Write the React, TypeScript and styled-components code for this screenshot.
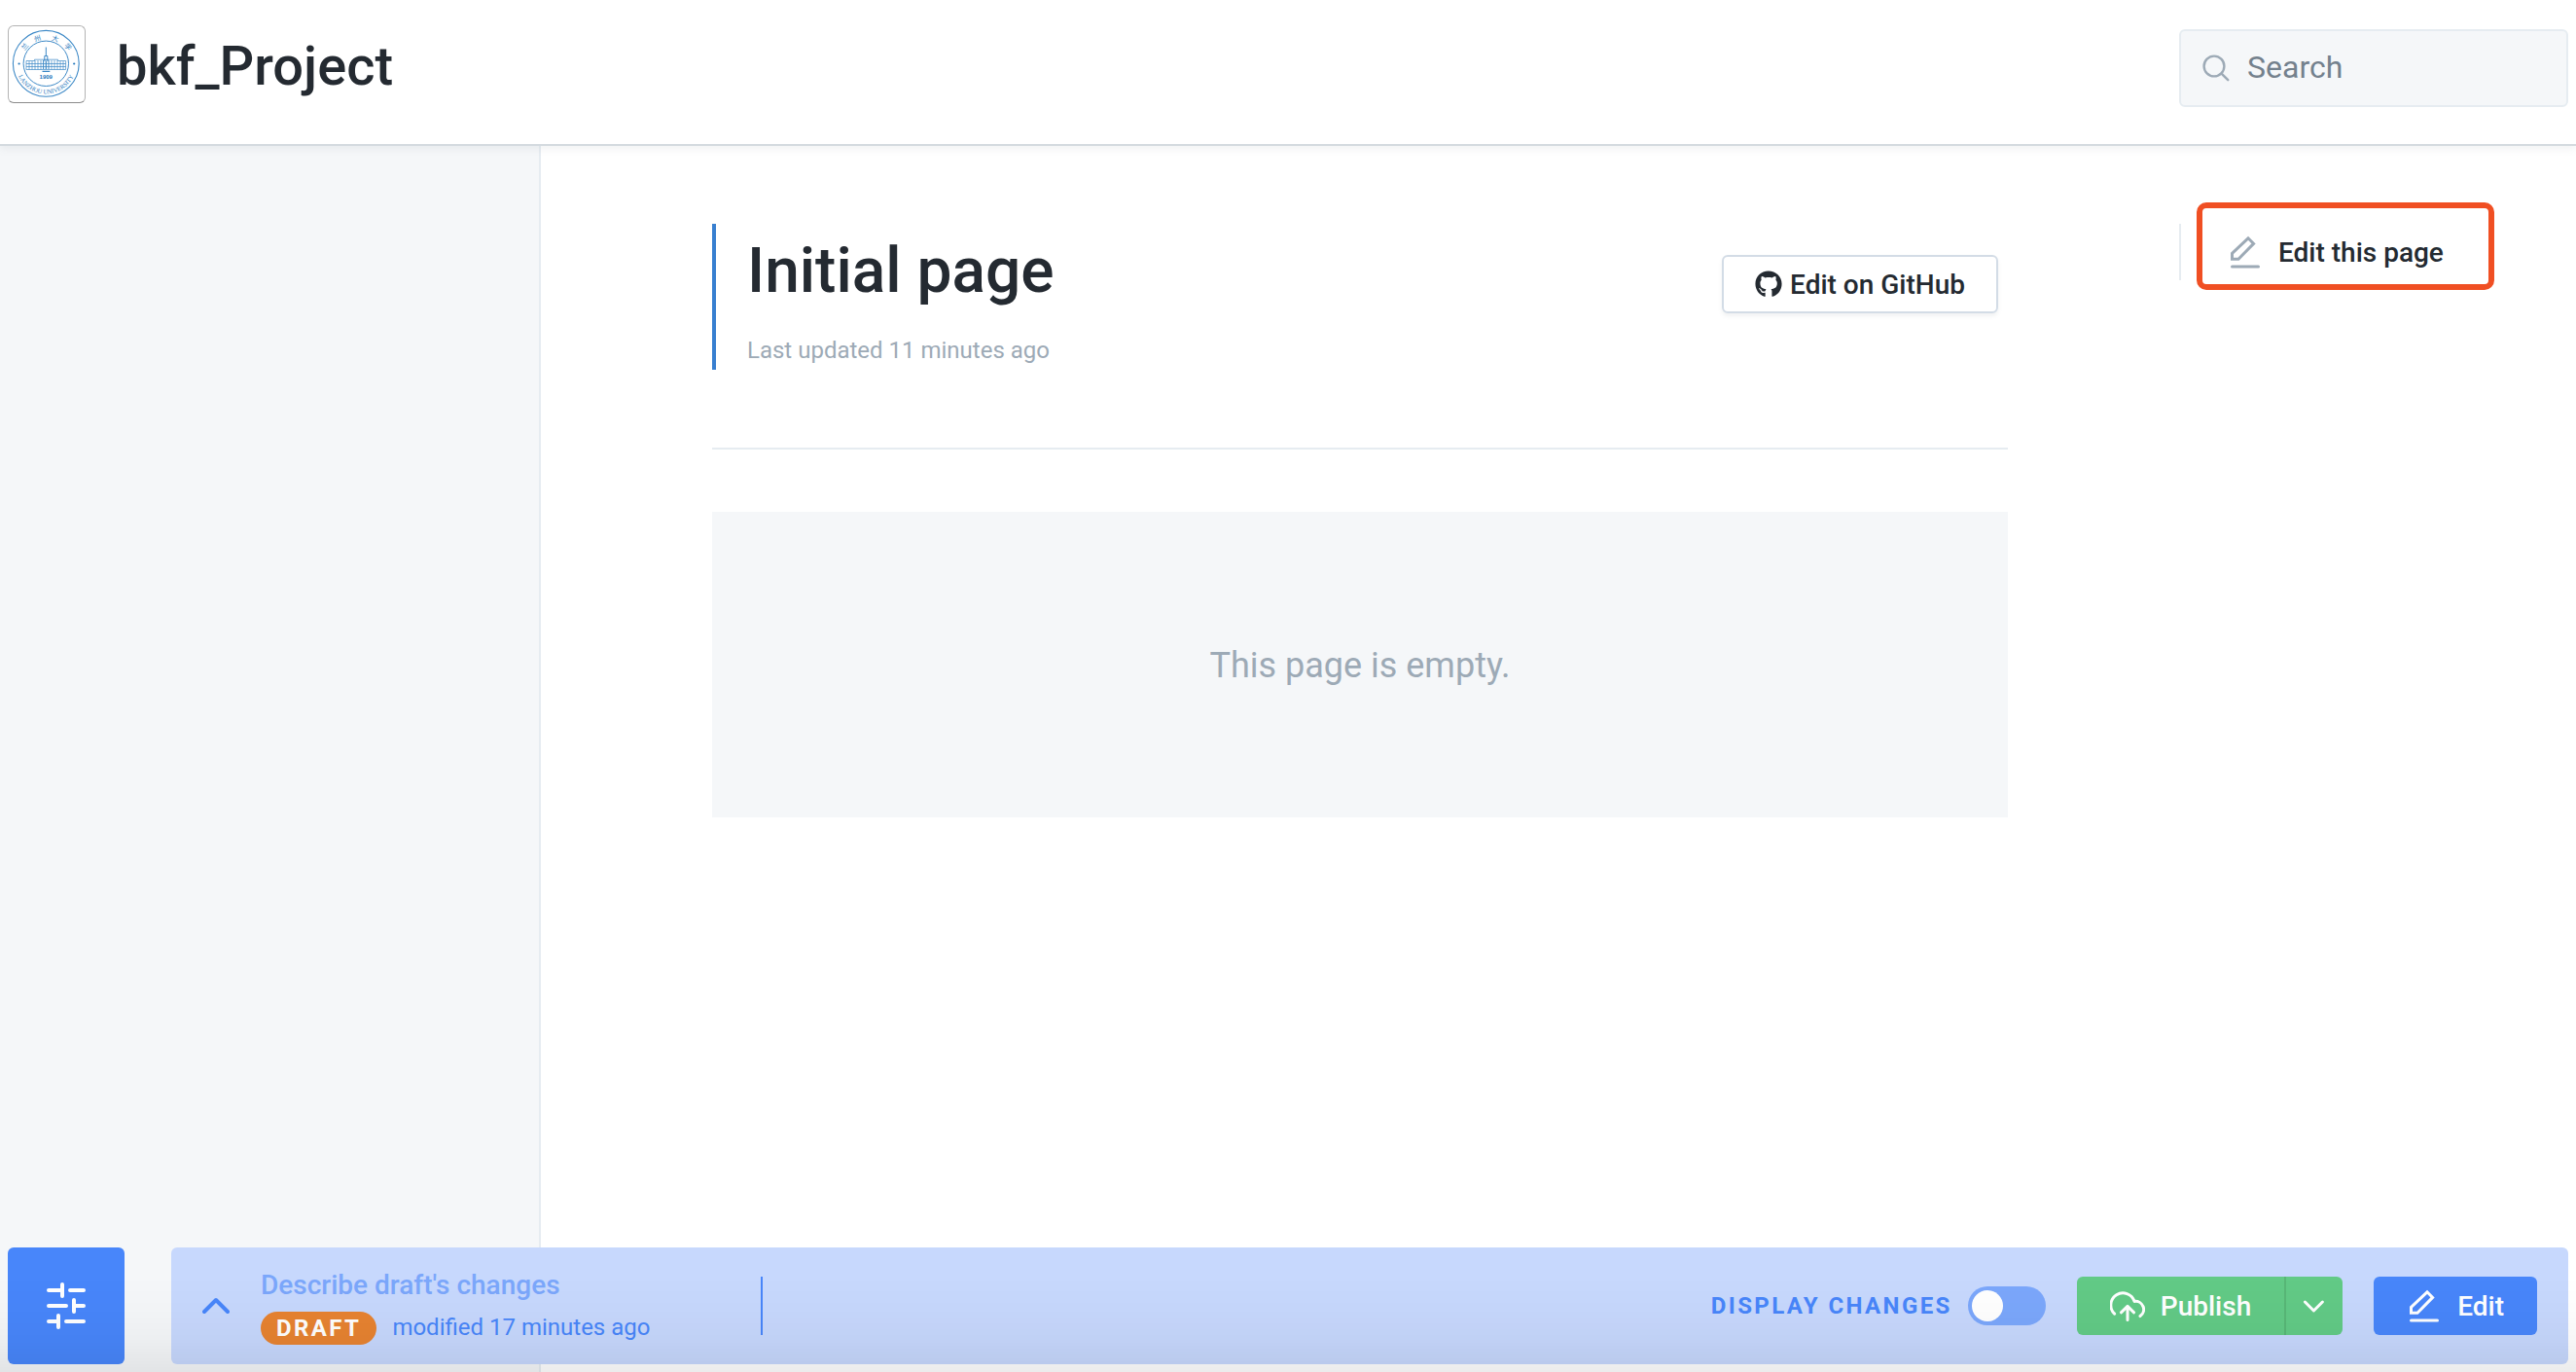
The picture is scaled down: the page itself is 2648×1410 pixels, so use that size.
import React from "react";
import styled, { createGlobalStyle } from "styled-components";
import { FaGithub } from "react-icons/fa";

const GlobalStyle = createGlobalStyle`
  *, *::before, *::after { box-sizing: border-box; }
  body {
    margin: 0;
    background: #ffffff;
    color: #242a31;
    font-family: Roboto, "Liberation Sans", sans-serif;
    font-size: 28px;
    -webkit-font-smoothing: antialiased;
  }
  button, input { font-family: inherit; }
  h1, p { margin: 0; }
`;

const Page = styled.div`
  display: flex;
  flex-direction: column;
  min-height: 100vh;
`;

const Header = styled.header`
  position: relative;
  display: flex;
  align-items: center;
  justify-content: space-between;
  height: 150px;
  padding: 0 8px 8px;
  background: #ffffff;
  border-bottom: 2px solid #d4dadf;
  box-shadow: 0 3px 8px rgba(116, 129, 141, 0.1);
`;

const Brand = styled.a`
  display: flex;
  align-items: center;
  gap: 32px;
  color: inherit;
  text-decoration: none;
`;

const LogoFrame = styled.span`
  display: block;
  width: 80px;
  height: 80px;
  margin-bottom: 8px;
  border: 1px solid #b4b4b4;
  border-bottom-color: #8c8c8c;
  border-radius: 6px;
  svg { display: block; margin: -1px; }
`;

const BrandName = styled.span`
  padding-bottom: 4px;
  font-size: 56px;
  line-height: 72px;
  font-weight: 500;
`;

const SearchBox = styled.label`
  display: flex;
  align-items: center;
  gap: 16px;
  width: 400px;
  height: 80px;
  padding: 0 20px;
  background: #f5f7f9;
  border: 2px solid #e6ecf1;
  border-radius: 6px;
  color: #9daab6;
  svg { flex: none; }
`;

const SearchInput = styled.input`
  flex: 1;
  min-width: 0;
  padding: 0 0 2px;
  border: 0;
  outline: 0;
  background: transparent;
  color: #242a31;
  font-size: 32px;
  line-height: 40px;
  &::placeholder { color: #74818d; opacity: 1; }
`;

const Body = styled.div`
  display: flex;
  flex: 1;
`;

const Sidebar = styled.nav`
  flex: none;
  width: 556px;
  background: #f5f7f9;
  border-right: 2px solid #e6ecf1;
`;

const Main = styled.main`
  flex: 1;
  min-width: 0;
  padding: 80px 176px 160px;
`;

const PageHead = styled.div`
  display: flex;
  align-items: flex-start;
  justify-content: space-between;
  padding-bottom: 80px;
  border-bottom: 2px solid #e6ecf1;
`;

const TitleBlock = styled.div`
  display: flex;
  flex-direction: column;
  gap: 12px;
  padding-left: 32px;
  border-left: 4px solid #387fd0;
`;

const Title = styled.h1`
  font-size: 64px;
  line-height: 98px;
  font-weight: 500;
`;

const Updated = styled.p`
  color: #9daab6;
  font-size: 24px;
  line-height: 40px;
`;

const GithubLink = styled.a`
  display: flex;
  align-items: center;
  gap: 8px;
  height: 60px;
  margin: 32px 10px 0 0;
  padding: 0 32px;
  border: 2px solid #d3dce6;
  border-radius: 6px;
  box-shadow: 0 3px 4px rgba(116, 129, 141, 0.1);
  color: #242a31;
  font-weight: 500;
  text-decoration: none;
`;

const EmptyNotice = styled.section`
  display: flex;
  align-items: center;
  justify-content: center;
  margin-top: 64px;
  padding: 134px 32px 132px;
  background: #f5f7f9;
  color: #9daab6;
  font-size: 36px;
  line-height: 48px;
`;

const Aside = styled.aside`
  flex: none;
  width: 408px;
  padding-top: 80px;
`;

const AsideList = styled.div`
  display: flex;
  padding-left: 16px;
  border-left: 2px solid #e6ecf1;
`;

const EditPageLink = styled.a`
  position: relative;
  display: flex;
  align-items: center;
  gap: 16px;
  width: 306px;
  height: 58px;
  padding-left: 32px;
  color: #242a31;
  font-weight: 500;
  text-decoration: none;
  svg { color: #9daab6; }
  &::after {
    content: "";
    position: absolute;
    inset: -22px 0 -10px;
    border: 6px solid #f04f23;
    border-radius: 10px;
  }
`;

const Dock = styled.footer`
  position: fixed;
  left: 8px;
  right: 8px;
  bottom: 8px;
  display: flex;
  gap: 48px;
`;

const BottomShade = styled.div`
  position: fixed;
  left: 0;
  right: 0;
  bottom: 0;
  height: 100px;
  pointer-events: none;
  background: linear-gradient(
    to bottom,
    rgba(0, 0, 0, 0),
    rgba(0, 0, 0, 0.01) 35%,
    rgba(0, 0, 0, 0.03) 65%,
    rgba(0, 0, 0, 0.075)
  );
`;

const SettingsButton = styled.button`
  display: flex;
  align-items: center;
  justify-content: center;
  flex: none;
  width: 120px;
  height: 120px;
  padding: 0;
  border: 0;
  border-radius: 6px;
  background: #4886fa;
  color: #ffffff;
`;

const DraftBar = styled.div`
  display: flex;
  align-items: center;
  flex: 1;
  min-width: 0;
  height: 120px;
  padding: 0 32px;
  border-radius: 6px;
  background: #c7d8fd;
  color: #4886fa;
`;

const ExpandButton = styled.button`
  display: flex;
  margin-right: 32px;
  padding: 0;
  border: 0;
  background: transparent;
  color: inherit;
`;

const DraftInfo = styled.div`
  display: flex;
  flex-direction: column;
  gap: 8px;
  width: 516px;
  height: 84px;
`;

const DraftInput = styled.input`
  width: 100%;
  height: 40px;
  padding: 0;
  border: 0;
  outline: 0;
  background: transparent;
  color: #4886fa;
  font-size: 28px;
  font-weight: 500;
  &::placeholder { color: #7ba7fb; opacity: 1; }
`;

const DraftMeta = styled.div`
  display: flex;
  align-items: flex-start;
  gap: 16px;
  font-size: 24px;
  line-height: 32px;
`;

const DraftBadge = styled.span`
  padding: 0 16px;
  border-radius: 17px;
  background: #e78331;
  color: #ffffff;
  font-weight: 700;
  line-height: 34px;
  letter-spacing: 0.1em;
`;

const Separator = styled.span`
  width: 2px;
  height: 60px;
  margin-left: -2px;
  background: #4886fa;
`;

const Actions = styled.div`
  display: flex;
  align-items: center;
  gap: 32px;
  margin-left: auto;
`;

const ToggleLabel = styled.label`
  display: flex;
  align-items: center;
  gap: 16px;
  font-size: 24px;
  font-weight: 700;
  line-height: 32px;
  letter-spacing: 0.1em;
`;

const Toggle = styled.input`
  appearance: none;
  display: flex;
  width: 80px;
  height: 40px;
  margin: 0;
  padding: 4px;
  border-radius: 20px;
  background: #7ba7fb;
  &::before {
    content: "";
    width: 32px;
    height: 32px;
    border-radius: 50%;
    background: #ffffff;
  }
  &:checked { justify-content: flex-end; background: #4886fa; }
`;

const ButtonGroup = styled.div`
  display: flex;
`;

const ActionButton = styled.button<{ $tone: string; $joined?: boolean }>`
  display: flex;
  align-items: center;
  gap: 16px;
  height: 60px;
  padding: 0 34px;
  border: 0;
  border-radius: ${(p) => (p.$joined ? "6px 0 0 6px" : "6px")};
  background: ${(p) => p.$tone};
  color: #ffffff;
  font-size: 28px;
  font-weight: 500;
`;

const MenuButton = styled.button`
  display: flex;
  align-items: center;
  justify-content: center;
  width: 60px;
  height: 60px;
  padding: 0;
  border: 0;
  border-left: 2px solid #58b777;
  border-radius: 0 6px 6px 0;
  background: #62ca86;
  color: #ffffff;
`;

const stroke = {
  fill: "none",
  stroke: "currentColor",
  strokeLinecap: "round" as const,
  strokeLinejoin: "round" as const,
};

const PencilIcon = () => (
  <svg width="36" height="36" viewBox="0 0 36 36" aria-hidden="true" {...stroke} strokeWidth="3">
    <path d="M4.5 25.2V19.4L21 3.8l5.6 5.6L11 25.2z" strokeLinejoin="miter" />
    <path d="M4.5 33H31.5" />
  </svg>
);

const CloudUploadIcon = () => (
  <svg width="36" height="36" viewBox="0 0 36 36" aria-hidden="true" {...stroke} strokeWidth="3">
    <path d="M4.6 26.2A12.4 12.4 0 1 1 25 13.4A8.4 8.4 0 0 1 31 28.6" />
    <path d="M11.4 24.8L18 18.4l6.6 6.4M18 19v13.4" />
  </svg>
);

const SearchIcon = () => (
  <svg width="32" height="32" viewBox="0 0 32 32" aria-hidden="true" {...stroke} strokeWidth="2.4">
    <circle cx="14" cy="14" r="10.4" />
    <path d="M21.6 21.6l6.6 6.6" />
  </svg>
);

const ChevronUp = () => (
  <svg width="28" height="28" viewBox="0 0 28 28" aria-hidden="true" {...stroke} strokeWidth="4">
    <path d="M2 20L14 8l12 12" />
  </svg>
);

const ChevronDown = () => (
  <svg width="24" height="24" viewBox="0 0 24 24" aria-hidden="true" {...stroke} strokeWidth="3">
    <path d="M2.4 8l9 9 9-9" />
  </svg>
);

const SlidersIcon = () => (
  <svg width="40" height="48" viewBox="0 0 40 48" aria-hidden="true" {...stroke} strokeWidth="4">
    <path d="M2 8H16M16 2V14M24 8H38" />
    <path d="M2 24H20M28 18V30M28 24H38" />
    <path d="M2 40H12M12 34V46M20 40H38" />
  </svg>
);

const hanzi: [string, number, number, number][] = [
  ["兰", 17.5, 22, -50],
  ["州", 30.5, 13.5, -18],
  ["大", 49, 13.5, 18],
  ["学", 62, 22, 50],
];

const UniversitySeal = () => (
  <svg width="80" height="80" viewBox="0 0 80 80" aria-hidden="true">
    <g fill="none" stroke="#3c88c6">
      <circle cx="39.3" cy="39.3" r="33.9" strokeWidth="1.1" />
      <circle cx="39.3" cy="39.3" r="23.2" strokeWidth="1" />
      <path d="M39.3 22.5V31M37.8 36V31.5h3V36M36.6 45V36h5.4v9" strokeWidth="1" />
      <path
        d="M19 36.5V45.5H59.6V36.5M19 36.5h8.5v-1.3h24v1.3h8.1M19 39.5h40.6M19 42.5h40.6M22 37v8.5M25 37v8.5M28 36v9.5M31 36v9.5M34 36v9.5M45 36v9.5M48 36v9.5M51 36v9.5M54 37v8.5M57 37v8.5"
        strokeWidth="0.7"
      />
      <path d="M35.5 47.4h7.8M39.3 37v8" strokeWidth="1.2" />
    </g>
    <g fill="#2276bb">
      <circle cx="11.6" cy="39.5" r="1.1" />
      <circle cx="68.2" cy="39.5" r="1.1" />
      <text x="39.3" y="55.4" textAnchor="middle" fontSize="6" fontWeight="700" fontFamily="Liberation Sans, sans-serif">
        1909
      </text>
      {hanzi.map(([char, x, y, angle]) => (
        <text
          key={char}
          transform={`translate(${x} ${y}) rotate(${angle})`}
          y="2.6"
          textAnchor="middle"
          fontSize="7"
          fontFamily="Noto Sans CJK SC, sans-serif"
        >
          {char}
        </text>
      ))}
      <path id="seal-arc" d="M8.1 39.3A31.2 31.2 0 0 0 70.5 39.3" fill="none" />
      <text fontSize="6.4" fontFamily="Liberation Serif, serif" textAnchor="middle">
        <textPath href="#seal-arc" startOffset="50%">
          LANZHOU UNIVERSITY
        </textPath>
      </text>
    </g>
  </svg>
);

export default function App() {
  return (
    <Page>
      <GlobalStyle />
      <Header>
        <Brand href="#">
          <LogoFrame>
            <UniversitySeal />
          </LogoFrame>
          <BrandName>bkf_Project</BrandName>
        </Brand>
        <SearchBox>
          <SearchIcon />
          <SearchInput type="search" placeholder="Search" aria-label="Search" />
        </SearchBox>
      </Header>
      <Body>
        <Sidebar aria-label="Pages" />
        <Main>
          <PageHead>
            <TitleBlock>
              <Title>Initial page</Title>
              <Updated>Last updated 11 minutes ago</Updated>
            </TitleBlock>
            <GithubLink href="#">
              <FaGithub size={28} aria-hidden="true" />
              Edit on GitHub
            </GithubLink>
          </PageHead>
          <EmptyNotice>
            <p>This page is empty.</p>
          </EmptyNotice>
        </Main>
        <Aside>
          <AsideList>
            <EditPageLink href="#">
              <PencilIcon />
              Edit this page
            </EditPageLink>
          </AsideList>
        </Aside>
      </Body>
      <Dock>
        <SettingsButton type="button" aria-label="Settings">
          <SlidersIcon />
        </SettingsButton>
        <DraftBar>
          <ExpandButton type="button" aria-label="Expand draft">
            <ChevronUp />
          </ExpandButton>
          <DraftInfo>
            <DraftInput type="text" placeholder="Describe draft's changes" aria-label="Describe draft's changes" />
            <DraftMeta>
              <DraftBadge>DRAFT</DraftBadge>
              <span>modified 17 minutes ago</span>
            </DraftMeta>
          </DraftInfo>
          <Separator />
          <Actions>
            <ToggleLabel>
              DISPLAY CHANGES
              <Toggle type="checkbox" role="switch" />
            </ToggleLabel>
            <ButtonGroup>
              <ActionButton type="button" $tone="#62ca86" $joined>
                <CloudUploadIcon />
                Publish
              </ActionButton>
              <MenuButton type="button" aria-label="More publish options">
                <ChevronDown />
              </MenuButton>
            </ButtonGroup>
            <ActionButton type="button" $tone="#4886fa">
              <PencilIcon />
              Edit
            </ActionButton>
          </Actions>
        </DraftBar>
      </Dock>
      <BottomShade />
    </Page>
  );
}
